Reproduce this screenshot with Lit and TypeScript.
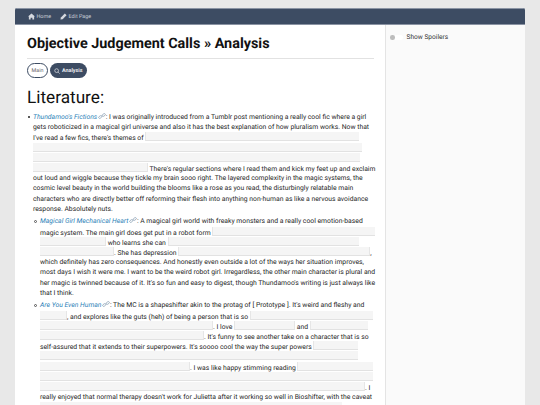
import { LitElement, html, css } from "lit";
import { customElement } from "lit/decorators.js";

type Part = string | number | { link: string };

const ITEM1: Part[][] = [
  [{ link: "Thundamoo's Fictions" }, ": I was originally introduced from a Tumblr post mentioning a really cool fic where a girl"],
  ["gets roboticized in a magical girl universe and also it has the best explanation of how pluralism works. Now that"],
  ["I've read a few fics, there's themes of ", 214],
  [329],
  [327],
  [115, " There's regular sections where I read them and kick my feet up and exclaim"],
  ["out loud and wiggle because they tickle my brain sooo right. The layered complexity in the magic systems, the"],
  ["cosmic level beauty in the world building the blooms like a rose as you read, the disturbingly relatable main"],
  ["characters who are directly better off reforming their flesh into anything non-human as like a nervous avoidance"],
  ["response. Absolutely nuts."],
];
const ITEM2: Part[][] = [
  [{ link: "Magical Girl Mechanical Heart" }, ": A magical girl world with freaky monsters and a really cool emotion-based"],
  ["magic system. The main girl does get put in a robot form ", 163],
  [66, " who learns she can ", 191],
  [74, ". She has depression ", 192, ","],
  ["which definitely has zero consequences. And honestly even outside a lot of the ways her situation improves,"],
  ["most days I wish it were me. I want to be the weird robot girl. Irregardless, the other main character is plural and"],
  ["her magic is twinned because of it. It's so fun and easy to digest, though Thundamoo's writing is just always like"],
  ["that I think."],
];
const ITEM3: Part[][] = [
  [{ link: "Are You Even Human" }, ": The MC is a shapeshifter akin to the protag of [ Prototype ]. It's weird and fleshy and"],
  [27, ", and explores like the guts (heh) of being a person that is so ", 123],
  [173, ". I love ", 61, " and ", 58],
  [164, ". It's funny to see another take on a character that is so"],
  ["self-assured that it extends to their superpowers. It's soooo cool the way the super powers ", 45],
  [318],
  [150, ". I was like happy stimming reading ", 76],
  [333],
  [325, ". I"],
  ["really enjoyed that normal therapy doesn't work for Julietta after it working so well in Bioshifter, with the caveat"],
  [302],
];

@customElement("app-root")
export class AppRoot extends LitElement {
  static styles = css`
    :host { display: block; height: 405px; overflow: hidden; background: #e8e8e8; font-family: Roboto, "Liberation Sans", sans-serif; color: #262626; text-rendering: geometricPrecision; }
    .card { margin: 8px 15px 0; border-radius: 2px 2px 0 0; overflow: hidden; background: #fff; height: 397px; display: flex; flex-direction: column; }
    .nav { background: #3d4c63; border-bottom: 1px solid #8a93a3; border-top: 1px solid #8a93a3; box-sizing: border-box; height: 17px; display: flex; align-items: center; gap: 9px; padding-left: 13px; color: #c9ced6; font-size: 5.4px; flex: none; }
    .nav span { display: inline-flex; align-items: center; gap: 1.5px; }
    .nav svg { width: 7px; height: 7px; fill: #d5d9df; }
    .body { flex: 1; display: flex; min-height: 0; }
    .main { width: 370px; flex: none; box-sizing: border-box; padding: 9px 11px 0 12px; overflow: hidden; }
    .side { flex: 1; background: #fafafa; border-left: 1px solid #e4e4e4; display: flex; align-items: flex-start; gap: 4px; padding: 8px 0 0 4px; font-size: 6.6px; color: #333; }
    .toggle { width: 12.5px; height: 5px; border-radius: 3px; background: #fff; margin-top: 2px; display: flex; align-items: center; }
    .dot { width: 4.5px; height: 4.5px; border-radius: 50%; background: #bdbdbd; }
    h1 { margin: 0; font-size: 14.4px; line-height: 20px; font-weight: 700; color: #111; padding-bottom: 4px; border-bottom: 1px solid #e2e2e2; }
    .tabs { display: flex; gap: 2px; margin-top: 4px; }
    .tab { box-sizing: border-box; height: 15px; border-radius: 8px; display: inline-flex; align-items: center; gap: 1.5px; font-size: 5.4px; }
    .tab.off { width: 21px; justify-content: center; border: 1px solid #3d4c63; color: #666; }
    .tab.on { width: 37px; justify-content: center; background: #3d4c63; color: #e8eaee; font-weight: 700; }
    .tab svg { width: 6px; height: 6px; fill: none; stroke: #e8eaee; stroke-width: 1.8; }
    h2 { margin: 9px 0 3px; font-size: 17.2px; line-height: 22px; font-weight: 400; color: #111; }
    ul { margin: 0; padding: 0 0 0 6px; list-style: none; font-size: 6.8px; line-height: 10.2px; }
    ul ul { padding: 0 0 0 7px; margin-top: 2.5px; }
    li { position: relative; }
    ul ul li { margin-bottom: 2.5px; }
    .bullet { position: absolute; left: -5px; top: 4px; width: 2.4px; height: 2.4px; border-radius: 50%; background: #222; }
    ul ul .bullet { left: -6px; width: 3px; height: 3px; background: none; border: 0.6px solid #555; box-sizing: border-box; }
    .line { white-space: nowrap; height: 10.2px; }
    .sp { display: inline-block; height: 9px; background: #f5f5f5; border-bottom: 1px solid #e2e2e2; box-sizing: border-box; vertical-align: -1.5px; }
    .sp.open { border-left: 1px solid #e6e6e6; }
    .sp.close { border-right: 1px solid #e6e6e6; }
    a { color: #2d7fb8; font-style: italic; }
    a svg { width: 8px; height: 6px; fill: none; stroke: #6f8aa3; stroke-width: 1.1; vertical-align: 0; margin-left: 0.5px; }
  `;

  private lines(rows: Part[][]) {
    return rows.map((row) => html`<div class="line">${row.map((p, i) => {
      if (typeof p === "number") {
        const cls = `sp${i > 0 ? " open" : ""}${i < row.length - 1 ? " close" : ""}`;
        return html`<span class=${cls} style="width:${p}px"></span>`;
      }
      if (typeof p === "string") return p;
      return html`<a>${p.link}<svg viewBox="0 0 16 12"><rect x="1" y="6" width="7" height="4" rx="2" transform="rotate(-35 4.5 8)"/><rect x="8" y="2" width="7" height="4" rx="2" transform="rotate(-35 11.5 4)"/></svg></a>`;
    })}</div>`);
  }

  render() {
    return html`<div class="card">
      <div class="nav">
        <span><svg viewBox="0 0 16 16"><path d="M8 1 0 8h2v7h4v-4h4v4h4V8h2z"/></svg>Home</span>
        <span><svg viewBox="0 0 16 16"><path d="M11 1l4 4-9 9-5 1 1-5z"/></svg>Edit Page</span>
      </div>
      <div class="body">
        <div class="main">
          <h1>Objective Judgement Calls » Analysis</h1>
          <div class="tabs">
            <span class="tab off">Main</span>
            <span class="tab on"><svg viewBox="0 0 16 16"><circle cx="7" cy="7" r="5"/><path d="M11 11l4 4"/></svg>Analysis</span>
          </div>
          <h2>Literature:</h2>
          <ul>
            <li><span class="bullet"></span>${this.lines(ITEM1)}
              <ul>
                <li><span class="bullet"></span>${this.lines(ITEM2)}</li>
                <li><span class="bullet"></span>${this.lines(ITEM3)}</li>
              </ul>
            </li>
          </ul>
        </div>
        <div class="side"><span class="toggle"><span class="dot"></span></span><span>Show Spoilers</span></div>
      </div>
    </div>`;
  }
}
